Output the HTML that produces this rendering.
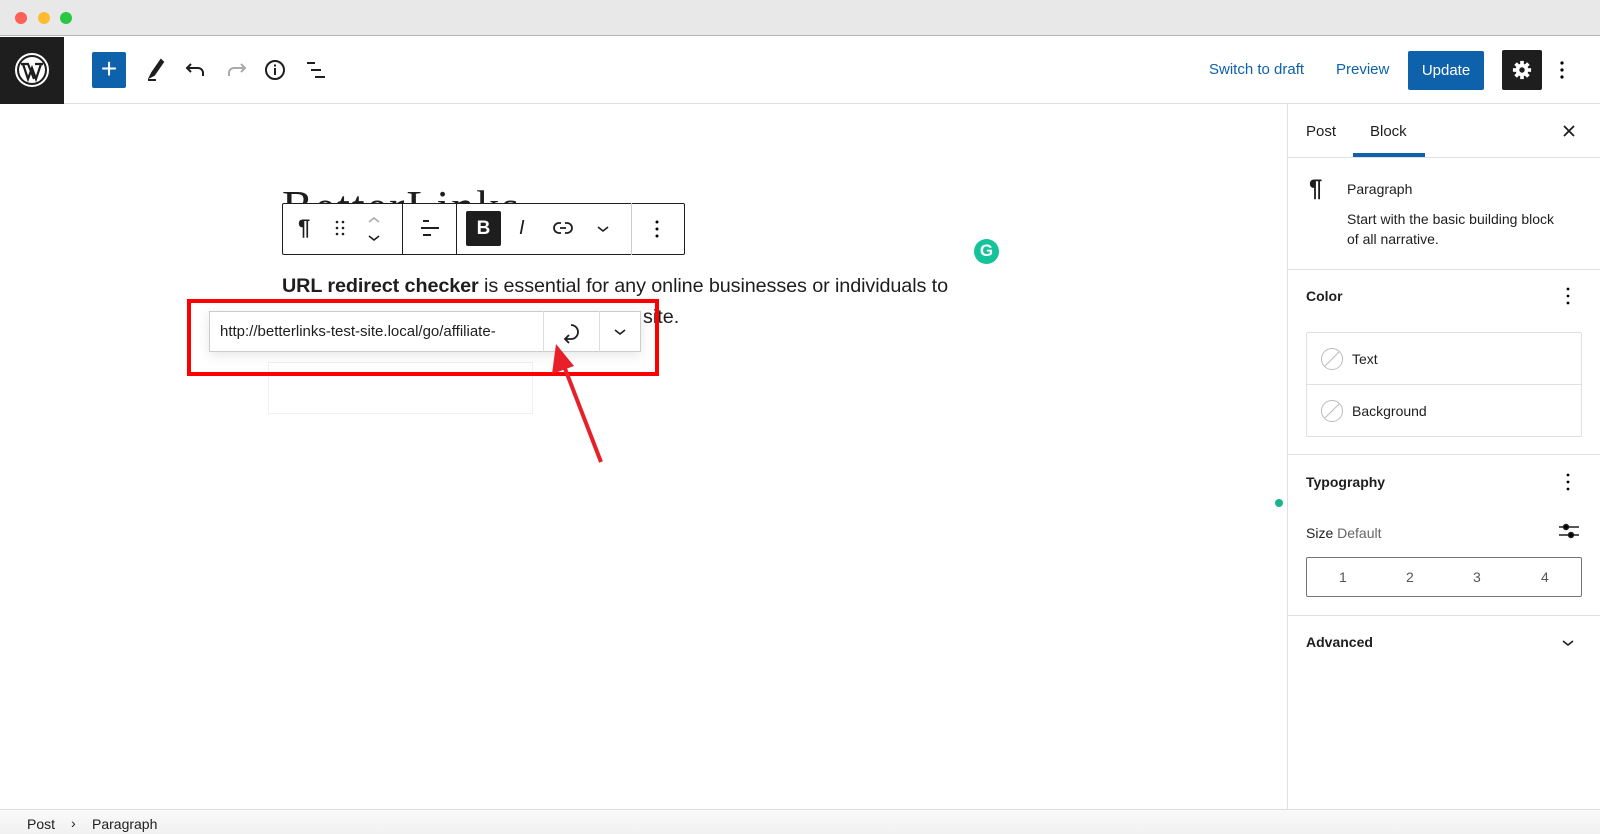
<!DOCTYPE html>
<html><head><meta charset="utf-8"><style>
*{margin:0;padding:0;box-sizing:border-box}
body{width:1600px;height:834px;overflow:hidden;background:#fff;font-family:"Liberation Sans",sans-serif;color:#1e1e1e;position:relative}
.a{position:absolute}
.t{position:absolute;white-space:nowrap}
</style></head><body>
<div class="a" style="left:0;top:0;width:1600px;height:36px;background:#e8e8e8;border-bottom:1px solid #b5b5b5"></div>
<div class="a" style="left:15px;top:12px;width:12px;height:12px;border-radius:50%;background:#fe5f57"></div>
<div class="a" style="left:38px;top:12px;width:12px;height:12px;border-radius:50%;background:#febc2e"></div>
<div class="a" style="left:60px;top:12px;width:12px;height:12px;border-radius:50%;background:#28c840"></div>
<div class="a" style="left:0;top:37px;width:1600px;height:67px;border-bottom:1px solid #e0e0e0"></div>
<div class="a" style="left:0;top:37px;width:64px;height:67px;background:#1e1e1e"></div>
<svg class="a" style="left:14px;top:52px" width="36" height="36" viewBox="0 0 36 36"><circle cx="18" cy="18" r="16" fill="none" stroke="#fff" stroke-width="2"/><circle cx="18" cy="18" r="13" fill="#fff"/><path d="M7 12h8M21 12h8M9 12l5 15 4-11 4 11 5-15M14 12l6 15" stroke="#1e1e1e" stroke-width="2.2" fill="none"/></svg>
<div class="a" style="left:92px;top:52px;width:34px;height:36px;background:#0d62ab;border-radius:2px"></div>
<div class="t" style="left:98px;top:52px;width:22px;text-align:center;color:#fff;font-size:28px;line-height:34px">+</div>
<svg class="a" style="left:143px;top:57px" width="24" height="26" viewBox="0 0 24 26" fill="none" stroke="#1e1e1e" stroke-width="2"><path d="M18 3L9 16l-2 4 4-2 9-13z" fill="#1e1e1e"/><path d="M5 23h8"/></svg>
<svg class="a" style="left:184px;top:60px" width="24" height="20" viewBox="0 0 24 20" fill="none" stroke="#1e1e1e" stroke-width="2"><path d="M7 4L3 8l4 4M3 8h11a5 5 0 015 5v3"/></svg>
<svg class="a" style="left:224px;top:60px" width="24" height="20" viewBox="0 0 24 20" fill="none" stroke="#aaa" stroke-width="2"><path d="M17 4l4 4-4 4M21 8H10a5 5 0 00-5 5v3"/></svg>
<svg class="a" style="left:264px;top:59px" width="22" height="22" viewBox="0 0 22 22" fill="none" stroke="#1e1e1e" stroke-width="2"><circle cx="11" cy="11" r="9"/><path d="M11 9v7M11 5.5v2"/></svg>
<svg class="a" style="left:305px;top:60px" width="22" height="20" viewBox="0 0 22 20" fill="none" stroke="#1e1e1e" stroke-width="2"><path d="M2 3h8M6 10h10M10 17h10"/></svg>
<div class="t" style="left:1209px;top:61px;color:#0d62ab;font-size:15px">Switch to draft</div>
<div class="t" style="left:1336px;top:61px;color:#0d62ab;font-size:15px">Preview</div>
<div class="a" style="left:1408px;top:51px;width:76px;height:39px;background:#0d62ab;border-radius:2px"></div>
<div class="t" style="left:1408px;top:62px;width:76px;text-align:center;color:#fff;font-size:15px">Update</div>
<div class="a" style="left:1502px;top:50px;width:40px;height:40px;background:#1e1e1e;border-radius:2px"></div>
<svg class="a" style="left:1512px;top:60px" width="20" height="20" viewBox="0 0 22 22"><g fill="#fff"><circle cx="11" cy="11" r="7"/><rect x="9" y="1" width="4" height="20"/><rect x="1" y="9" width="20" height="4"/><rect x="9" y="1" width="4" height="20" transform="rotate(45 11 11)"/><rect x="9" y="1" width="4" height="20" transform="rotate(-45 11 11)"/></g><circle cx="11" cy="11" r="3" fill="#1e1e1e"/></svg>
<svg class="a" style="left:1558px;top:60px" width="8" height="20"><circle cx="4" cy="3" r="1.6"/><circle cx="4" cy="10" r="1.6"/><circle cx="4" cy="17" r="1.6"/></svg>
<div class="a" style="left:1287px;top:104px;width:1px;height:705px;background:#e0e0e0"></div>
<div class="t" style="left:1306px;top:123px;font-size:15px">Post</div>
<div class="t" style="left:1370px;top:123px;font-size:15px">Block</div>
<div class="a" style="left:1353px;top:153px;width:72px;height:4px;background:#0d62ab"></div>
<div class="a" style="left:1288px;top:157px;width:312px;height:1px;background:#e0e0e0"></div>
<svg class="a" style="left:1562px;top:124px" width="14" height="14" stroke="#1e1e1e" stroke-width="1.8"><path d="M2 2l10 10M12 2L2 12"/></svg>
<div class="t" style="left:1309px;top:175px;font-size:24px;font-weight:bold">¶</div>
<div class="t" style="left:1347px;top:181px;font-size:14px">Paragraph</div>
<div class="t" style="left:1347px;top:209px;font-size:14px;line-height:20px">Start with the basic building block<br>of all narrative.</div>
<div class="a" style="left:1288px;top:269px;width:312px;height:1px;background:#e0e0e0"></div>
<div class="t" style="left:1306px;top:288px;font-size:14px;font-weight:bold">Color</div>
<svg class="a" style="left:1564px;top:286px" width="8" height="20"><circle cx="4" cy="3" r="1.4"/><circle cx="4" cy="10" r="1.4"/><circle cx="4" cy="17" r="1.4"/></svg>
<div class="a" style="left:1306px;top:332px;width:276px;height:105px;border:1px solid #e0e0e0;border-radius:2px"></div>
<div class="a" style="left:1306px;top:384px;width:276px;height:1px;background:#e0e0e0"></div>
<svg class="a" style="left:1320px;top:347px" width="24" height="24" fill="none" stroke="#bbb"><circle cx="12" cy="12" r="10.5"/><path d="M5 19L19 5"/></svg>
<svg class="a" style="left:1320px;top:399px" width="24" height="24" fill="none" stroke="#bbb"><circle cx="12" cy="12" r="10.5"/><path d="M5 19L19 5"/></svg>
<div class="t" style="left:1352px;top:351px;font-size:14px">Text</div>
<div class="t" style="left:1352px;top:403px;font-size:14px">Background</div>
<div class="a" style="left:1288px;top:454px;width:312px;height:1px;background:#e0e0e0"></div>
<div class="t" style="left:1306px;top:474px;font-size:14px;font-weight:bold">Typography</div>
<svg class="a" style="left:1564px;top:472px" width="8" height="20"><circle cx="4" cy="3" r="1.4"/><circle cx="4" cy="10" r="1.4"/><circle cx="4" cy="17" r="1.4"/></svg>
<div class="a" style="left:1275px;top:499px;width:8px;height:8px;border-radius:50%;background:#19b58a"></div>
<div class="t" style="left:1306px;top:525px;font-size:14px">Size <span style="color:#666">Default</span></div>
<svg class="a" style="left:1559px;top:522px" width="20" height="18" stroke="#1e1e1e" stroke-width="1.5"><path d="M0 5h20M0 13h20"/><circle cx="7" cy="5" r="2.5"/><circle cx="12" cy="13" r="2.5"/></svg>
<div class="a" style="left:1306px;top:557px;width:276px;height:40px;border:1px solid #757575;border-radius:2px"></div>
<div class="t" style="left:1339px;top:569px;font-size:14px;color:#555">1</div>
<div class="t" style="left:1406px;top:569px;font-size:14px;color:#555">2</div>
<div class="t" style="left:1473px;top:569px;font-size:14px;color:#555">3</div>
<div class="t" style="left:1541px;top:569px;font-size:14px;color:#555">4</div>
<div class="a" style="left:1288px;top:615px;width:312px;height:1px;background:#e0e0e0"></div>
<div class="t" style="left:1306px;top:634px;font-size:14px;font-weight:bold">Advanced</div>
<svg class="a" style="left:1561px;top:638px" width="14" height="10" fill="none" stroke="#1e1e1e" stroke-width="1.6"><path d="M2 3l5 4 5-4"/></svg>
<div class="a" style="left:0;top:809px;width:1600px;height:25px;background:linear-gradient(#fafafa,#f1f1f1);border-top:1px solid #ddd"></div>
<div class="t" style="left:27px;top:816px;font-size:14px">Post</div>
<div class="t" style="left:71px;top:815px;font-size:14px">›</div>
<div class="t" style="left:92px;top:816px;font-size:14px">Paragraph</div>
<div class="a" style="left:282px;top:176px;width:400px;height:27px;overflow:hidden"><div class="t" style="left:0;top:4px;font-family:'Liberation Serif',serif;font-size:46px;letter-spacing:2px;color:#1e1e1e">BetterLinks</div></div>
<div class="a" style="left:282px;top:203px;width:403px;height:52px;border:1px solid #1e1e1e;border-radius:2px;background:#fff"></div>
<div class="a" style="left:402px;top:203px;width:1px;height:52px;background:#1e1e1e"></div>
<div class="a" style="left:456px;top:203px;width:1px;height:52px;background:#1e1e1e"></div>
<div class="a" style="left:631px;top:203px;width:1px;height:52px;background:#ccc"></div>
<div class="t" style="left:298px;top:215px;font-size:22px;font-weight:bold">¶</div>
<svg class="a" style="left:335px;top:220px" width="10" height="16"><g fill="#1e1e1e"><circle cx="2" cy="2" r="1.3"/><circle cx="8" cy="2" r="1.3"/><circle cx="2" cy="8" r="1.3"/><circle cx="8" cy="8" r="1.3"/><circle cx="2" cy="14" r="1.3"/><circle cx="8" cy="14" r="1.3"/></g></svg>
<svg class="a" style="left:367px;top:214px" width="14" height="30" fill="none" stroke-width="1.6"><path d="M2 8l5-4 5 4" stroke="#aaa"/><path d="M2 22l5 4 5-4" stroke="#1e1e1e"/></svg>
<svg class="a" style="left:419px;top:219px" width="20" height="18" stroke="#1e1e1e" stroke-width="2"><path d="M4 2h6M2 9h18M4 16h8"/></svg>
<div class="a" style="left:466px;top:211px;width:35px;height:35px;background:#1e1e1e;border-radius:2px"></div>
<div class="t" style="left:466px;top:218px;width:35px;text-align:center;color:#fff;font-size:19px;font-weight:bold">B</div>
<div class="t" style="left:519px;top:217px;font-size:20px;font-style:italic">I</div>
<svg class="a" style="left:552px;top:220px" width="22" height="16" fill="none" stroke="#1e1e1e" stroke-width="1.8"><path d="M9 3H7a5 5 0 000 10h2M13 3h2a5 5 0 010 10h-2M8 8h6"/></svg>
<svg class="a" style="left:596px;top:224px" width="14" height="10" fill="none" stroke="#1e1e1e" stroke-width="1.6"><path d="M2 3l5 4 5-4"/></svg>
<svg class="a" style="left:654px;top:219px" width="6" height="20"><circle cx="3" cy="3" r="1.5"/><circle cx="3" cy="10" r="1.5"/><circle cx="3" cy="17" r="1.5"/></svg>
<div class="t" style="left:282px;top:275px;font-size:19.8px;letter-spacing:-0.1px"><b>URL redirect checker</b> is essential for any online businesses or individuals to</div>
<div class="t" style="left:643px;top:306px;font-size:19.8px">site.</div>
<div class="a" style="left:268px;top:362px;width:265px;height:52px;border:1px solid #f0f0f0;background:#fff"></div>
<div class="a" style="left:209px;top:311px;width:432px;height:41px;background:#fff;border:1px solid #ccc;box-shadow:0 3px 12px rgba(0,0,0,.1)"></div>
<div class="a" style="left:543px;top:311px;width:1px;height:41px;background:#ddd"></div>
<div class="a" style="left:599px;top:311px;width:1px;height:41px;background:#ddd"></div>
<div class="t" style="left:220px;top:323px;font-size:15px;color:#1e1e1e">http://betterlinks-test-site.local/go/affiliate-</div>
<svg class="a" style="left:561px;top:321px" width="24" height="24" fill="none" stroke="#1e1e1e" stroke-width="1.8"><path d="M10 4a7 7 0 110 14H5M8 14l-4 4 4 4"/></svg>
<svg class="a" style="left:613px;top:327px" width="14" height="10" fill="none" stroke="#1e1e1e" stroke-width="1.6"><path d="M2 3l5 4 5-4"/></svg>
<div class="a" style="left:187px;top:299px;width:472px;height:77px;border:4px solid #f00"></div>
<svg class="a" style="left:540px;top:336px" width="70" height="130"><path d="M61 126L24 30" stroke="#e8202a" stroke-width="4"/><path d="M16 8L12 38 34 30z" fill="#e8202a"/></svg>
<div class="a" style="left:974px;top:239px;width:25px;height:25px;border-radius:50%;background:#15c39a"></div>
<div class="t" style="left:974px;top:241px;width:25px;text-align:center;color:#fff;font-size:17px;font-weight:bold">G</div>
</body></html>
